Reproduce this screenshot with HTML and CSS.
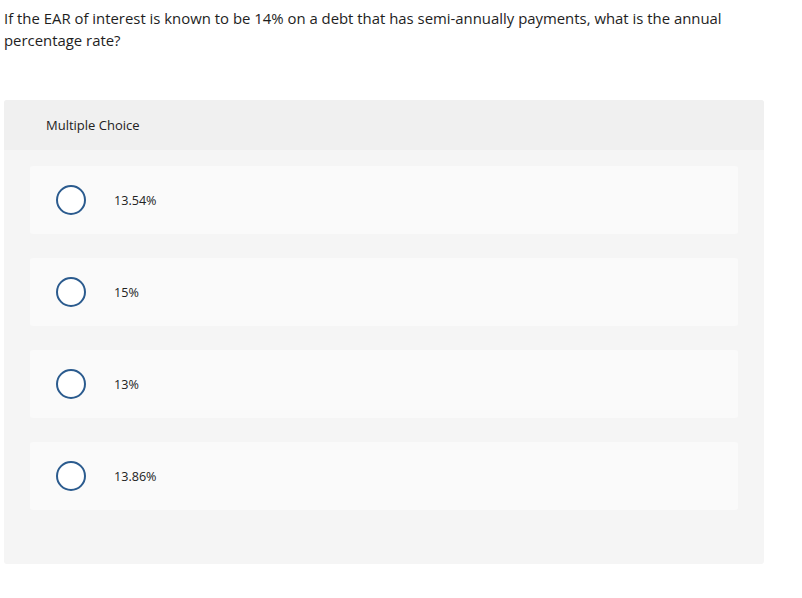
FILE: index.html
```html
<!DOCTYPE html>
<html>
<head>
<meta charset="utf-8">
<link rel="stylesheet" href="styles.css">
</head>
<body>
<div class="page">
  <p class="question">If the EAR of interest is known to be 14% on a debt that has semi-annually payments, what is the annual percentage rate?</p>
  <div class="panel">
    <div class="panel-head">Multiple Choice</div>
    <div class="options">
      <div class="option"><span class="radio"></span><span class="label">13.54%</span></div>
      <div class="option"><span class="radio"></span><span class="label">15%</span></div>
      <div class="option"><span class="radio"></span><span class="label">13%</span></div>
      <div class="option"><span class="radio"></span><span class="label">13.86%</span></div>
    </div>
  </div>
</div>
</body>
</html>
```
FILE: styles.css
```css
html, body {
  margin: 0;
  padding: 0;
  background: #ffffff;
}
body {
  font-family: "Open Sans", "Lato", sans-serif;
  color: #222222;
}
.page {
  padding: 0 38px 0 4px;
}
.question {
  margin: 0;
  padding-top: 7px;
  font-size: 14.9px;
  line-height: 22px;
  color: #1e1e1e;
}
.panel {
  margin-top: 49px;
  background: #f5f5f5;
  border-radius: 3px;
  overflow: hidden;
}
.panel-head {
  height: 50px;
  background: #f0f0f0;
  padding-left: 42px;
  display: flex;
  align-items: center;
  font-size: 13px;
  color: #222222;
}
.options {
  padding: 16px 26px 54px 26px;
  display: flex;
  flex-direction: column;
  gap: 24px;
}
.option {
  height: 68px;
  background: #fafafa;
  border-radius: 3px;
  display: flex;
  align-items: center;
  padding-left: 26px;
}
.radio {
  width: 26px;
  height: 26px;
  border: 2px solid #2b5b8e;
  border-radius: 50%;
  background: #ffffff;
  flex: none;
}
.label {
  margin-left: 28px;
  font-size: 12.6px;
  color: #222222;
}
```
